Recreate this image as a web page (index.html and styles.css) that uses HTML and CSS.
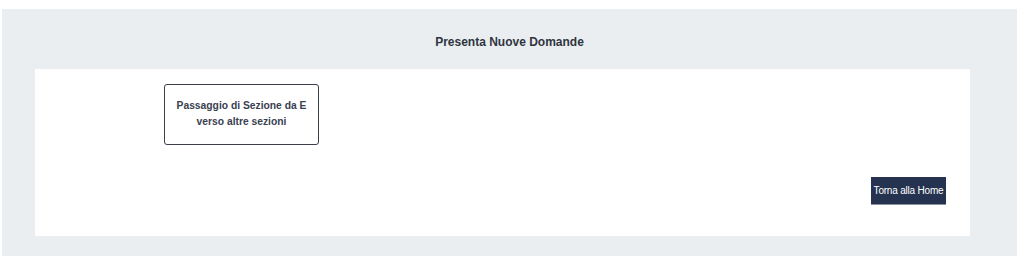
FILE: index.html
```html
<!DOCTYPE html>
<html lang="it">
<head>
<meta charset="utf-8">
<title>Presenta Nuove Domande</title>
<link rel="stylesheet" href="styles.css">
</head>
<body>
<div class="panel">
  <div class="title">Presenta Nuove Domande</div>
  <div class="content">
    <a class="card" href="#">Passaggio di Sezione da E<br>verso altre sezioni</a>
    <button class="home-btn" type="button">Torna alla Home</button>
  </div>
</div>
</body>
</html>
```
FILE: styles.css
```css
html, body {
  margin: 0;
  padding: 0;
  background: #ffffff;
  font-family: "Liberation Sans", Arial, sans-serif;
}
.panel {
  margin: 9px 0 0 2px;
  width: 1015px;
  height: 247px;
  box-sizing: border-box;
  background: #ebeef1;
  display: flex;
  flex-direction: column;
}
.title {
  height: 60px;
  display: flex;
  align-items: center;
  justify-content: center;
  font-size: 12px;
  font-weight: bold;
  color: #2f3540;
  padding-top: 5px;
  box-sizing: border-box;
}
.content {
  margin: 0 47px 0 33px;
  height: 167px;
  background: #ffffff;
  display: flex;
  flex-direction: column;
  align-items: flex-start;
}
.card {
  margin: 15px 0 0 129px;
  width: 155px;
  height: 61px;
  box-sizing: border-box;
  border: 1px solid #3a3f4a;
  border-radius: 3px;
  display: flex;
  align-items: center;
  justify-content: center;
  text-align: center;
  font-size: 10.3px;
  font-weight: bold;
  line-height: 16px;
  color: #3a4150;
  text-decoration: none;
  background: #ffffff;
  padding-bottom: 2px;
}
.home-btn {
  align-self: flex-end;
  margin: 32px 24px 0 0;
  width: 75px;
  height: 28px;
  padding: 0;
  border: none;
  border-bottom: 1px solid #8a93a3;
  background: #263350;
  color: #ffffff;
  font-family: "Liberation Sans", Arial, sans-serif;
  font-size: 10px;
  letter-spacing: -0.2px;
}
```
